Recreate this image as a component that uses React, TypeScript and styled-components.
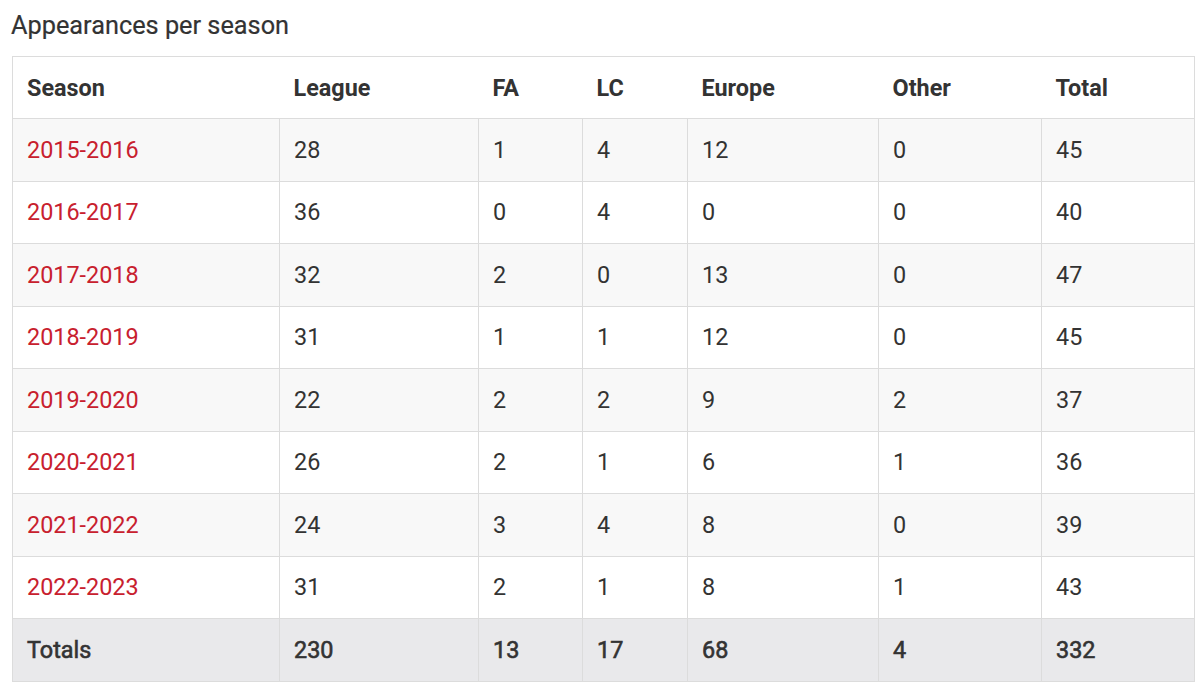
import React from "react";
import styled, { createGlobalStyle } from "styled-components";

const Global = createGlobalStyle`
  html, body { margin: 0; padding: 0; background: #fff; }
  body { font-family: Roboto, "Noto Sans", Arial, sans-serif; color: #333; }
`;

const Page = styled.div`
  padding: 10px 6px 0 12px;
`;

const Title = styled.h2`
  margin: 0 0 14px -1px;
  font-size: 25.3px;
  font-weight: 400;
  line-height: 32px;
  color: #333;
  -webkit-text-stroke: 0.2px #333;
`;

const Table = styled.table`
  width: 1182px;
  border-collapse: collapse;
  table-layout: fixed;
  border: 1px solid #dcdcdc;
`;

const HeadCell = styled.th`
  text-align: left;
  font-weight: 700;
  font-size: 23.4px;
  padding: 0 0 0 14px;
  height: 61px;
  border-bottom: 1px solid #dcdcdc;
  color: #333;
`;

const Row = styled.tr<{ $bg: string }>`
  background: ${(p) => p.$bg};
  height: 62.5px;
`;

const Cell = styled.td<{ $bold?: boolean; $link?: boolean }>`
  font-size: 23.4px;
  font-weight: 400;
  color: ${(p) => (p.$link ? "#c8202e" : "#333")};
  -webkit-text-stroke: ${(p) => (p.$bold ? "0.6px #333" : "0")};
  padding: 0 0 0 14px;
  border: 1px solid #dcdcdc;
`;

const widths = [267, 199, 104, 105, 191, 163, 153];
const heads = ["Season", "League", "FA", "LC", "Europe", "Other", "Total"];
const rows: (string | number)[][] = [
  ["2015-2016", 28, 1, 4, 12, 0, 45],
  ["2016-2017", 36, 0, 4, 0, 0, 40],
  ["2017-2018", 32, 2, 0, 13, 0, 47],
  ["2018-2019", 31, 1, 1, 12, 0, 45],
  ["2019-2020", 22, 2, 2, 9, 2, 37],
  ["2020-2021", 26, 2, 1, 6, 1, 36],
  ["2021-2022", 24, 3, 4, 8, 0, 39],
  ["2022-2023", 31, 2, 1, 8, 1, 43],
];
const totals = ["Totals", 230, 13, 17, 68, 4, 332];

export default function App() {
  return (
    <Page>
      <Global />
      <Title>Appearances per season</Title>
      <Table>
        <colgroup>
          {widths.map((w, i) => (
            <col key={i} style={{ width: w }} />
          ))}
        </colgroup>
        <thead>
          <tr>
            {heads.map((h) => (
              <HeadCell key={h}>{h}</HeadCell>
            ))}
          </tr>
        </thead>
        <tbody>
          {rows.map((r, i) => (
            <Row key={i} $bg={i % 2 === 0 ? "#f8f8f8" : "#ffffff"}>
              {r.map((v, j) => (
                <Cell key={j} $link={j === 0}>
                  {v}
                </Cell>
              ))}
            </Row>
          ))}
          <Row $bg="#e9e9eb">
            {totals.map((v, j) => (
              <Cell key={j} $bold>
                {v}
              </Cell>
            ))}
          </Row>
        </tbody>
      </Table>
    </Page>
  );
}
